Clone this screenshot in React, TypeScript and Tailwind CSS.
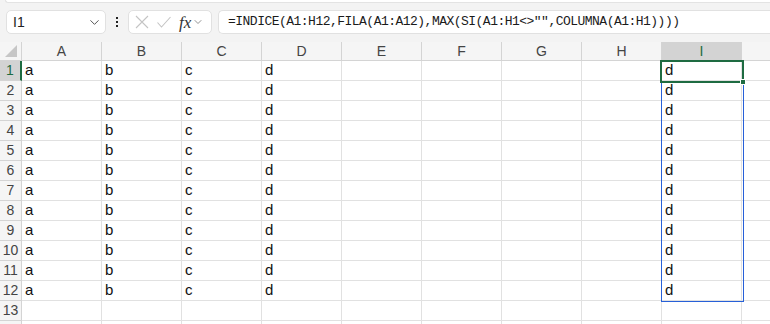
import { ChevronDown } from "lucide-react";

const cols = ["A", "B", "C", "D", "E", "F", "G", "H", "I"];
const rows = Array.from({ length: 14 }, (_, i) => i + 1);

function cellValue(row: number, col: string) {
  if (row > 12) return "";
  if (col === "A") return "a";
  if (col === "B") return "b";
  if (col === "C") return "c";
  if (col === "D" || col === "I") return "d";
  return "";
}

export default function App() {
  return (
    <div className="w-[770px] h-[324px] overflow-hidden bg-[#f3f3f3] relative font-['Liberation_Sans',sans-serif] text-[#1b1b1b]">
      {/* ribbon edge */}
      <div className="h-[3px] ml-[5px] bg-white rounded-bl-[6px] border-b border-l border-[#e3e3e3]" />

      {/* formula bar */}
      <div className="h-[39px] flex items-start pt-[7px] pl-[6px]">
        <div className="w-[100px] h-[24px] bg-white border border-[#e1e1e1] rounded-[5px] flex items-center pl-[6px] pr-[3px]">
          <span className="text-[14px] text-[#222] flex-1">I1</span>
          <ChevronDown className="w-[15px] h-[15px] text-[#555]" strokeWidth={1.6} />
        </div>
        <div className="w-[22px] h-[24px] flex flex-col items-center justify-center gap-[2px]">
          <span className="w-[2px] h-[2px] bg-[#222]" />
          <span className="w-[2px] h-[2px] bg-[#222]" />
          <span className="w-[2px] h-[2px] bg-[#222]" />
        </div>
        <div className="w-[84px] h-[24px] bg-white border border-[#e1e1e1] rounded-[5px] flex items-center pl-[5px]">
          <svg width="16" height="16" viewBox="0 0 16 16" className="mr-[6px]">
            <path d="M2 2 L14 14 M14 2 L2 14" stroke="#c4c4c4" strokeWidth="1.1" fill="none" />
          </svg>
          <svg width="16" height="16" viewBox="0 0 16 16" className="mr-[7px]">
            <path d="M1.5 8.5 L5.5 13 L14.5 3" stroke="#c4c4c4" strokeWidth="1.1" fill="none" />
          </svg>
          <span className="font-['Liberation_Serif',serif] italic text-[17px] text-[#333] leading-none mr-[1px]">fx</span>
          <ChevronDown className="w-[12px] h-[12px] text-[#777]" strokeWidth={1.6} />
        </div>
        <div className="ml-[6px] flex-1 h-[24px] bg-white border border-[#e1e1e1] border-r-0 rounded-l-[5px] flex items-center pl-[9px]">
          <span className="font-['Liberation_Mono',monospace] text-[13px] tracking-[-0.52px] text-[#1b1b1b] whitespace-nowrap">
            =INDICE(A1:H12,FILA(A1:A12),MAX(SI(A1:H1&lt;&gt;"",COLUMNA(A1:H1))))
          </span>
        </div>
      </div>

      {/* sheet */}
      <div className="relative bg-white">
        <div className="flex h-[19px] bg-[#f5f5f5] border-b border-[#d4d4d4]">
          <div className="w-[22px] shrink-0 border-r border-[#d4d4d4] relative">
            <svg width="14" height="14" viewBox="0 0 14 14" className="absolute right-[3px] bottom-[2px]">
              <path d="M13 1 L13 13 L1 13 Z" fill="#c6c6c6" />
            </svg>
          </div>
          {cols.map((c) => (
            <div
              key={c}
              className={
                c === "I"
                  ? "w-[80px] shrink-0 border-r border-[#d4d4d4] bg-[#d3d3d3] text-[#1e6b41] flex items-center justify-center text-[14px]"
                  : "w-[80px] shrink-0 border-r border-[#d4d4d4] text-[#444] flex items-center justify-center text-[14px]"
              }
            >
              {c}
            </div>
          ))}
          <div className="flex-1" />
        </div>

        {rows.map((r) => (
          <div key={r} className="flex h-[20px]">
            <div
              className={
                r === 1
                  ? "w-[22px] shrink-0 bg-[#d3d3d3] text-[#1e6b41] border-r-2 border-r-[#1e6b41] border-b border-b-[#d4d4d4] flex items-center justify-center text-[14px]"
                  : "w-[22px] shrink-0 bg-[#f5f5f5] text-[#444] border-r border-[#d4d4d4] border-b border-b-[#d4d4d4] flex items-center justify-center text-[14px]"
              }
            >
              {r <= 13 ? r : ""}
            </div>
            {cols.map((c) => (
              <div
                key={c}
                className="w-[80px] shrink-0 border-r border-b border-[#e1e1e1] flex items-center pl-[3px] text-[15px] text-[#111]"
              >
                {cellValue(r, c)}
              </div>
            ))}
            <div className="flex-1 border-b border-[#e1e1e1]" />
          </div>
        ))}

        {/* selected range */}
        <div className="absolute left-[661px] top-[39px] w-[83px] h-[221px] border border-[#2760d8] pointer-events-none" />
        <div className="absolute left-[660px] top-[18px] w-[84px] h-[23px] border-2 border-[#1e6b41] pointer-events-none" />
        <div className="absolute left-[740px] top-[37px] w-[6px] h-[6px] bg-[#1e6b41] border border-white pointer-events-none" />
      </div>
    </div>
  );
}
